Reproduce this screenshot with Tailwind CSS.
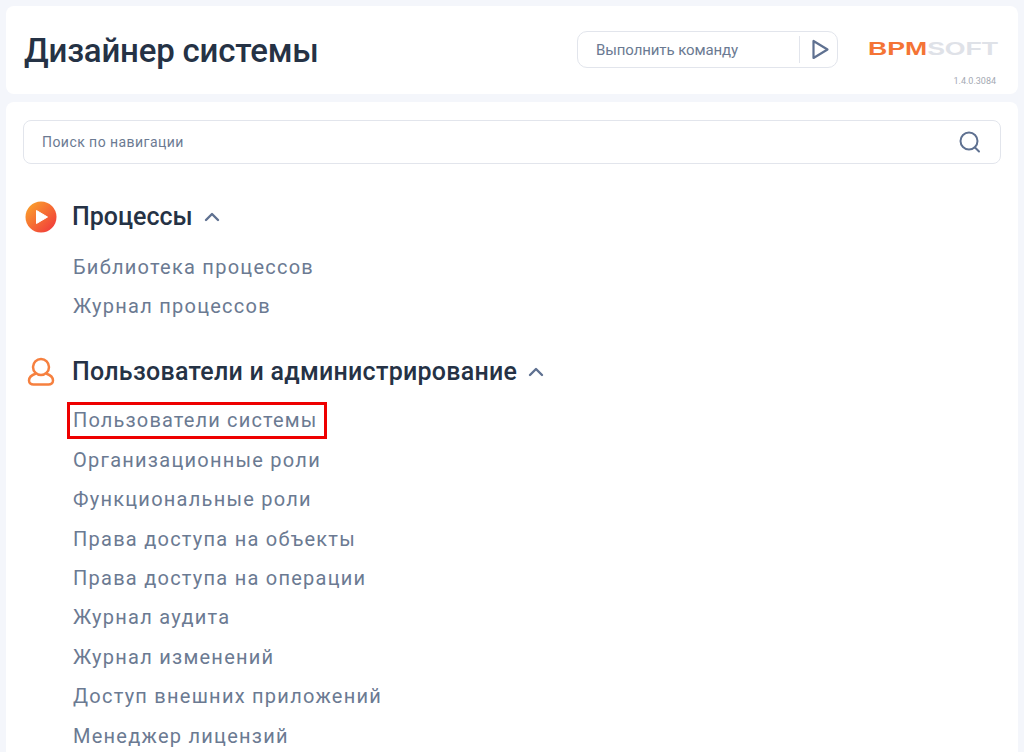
<!DOCTYPE html>
<html lang="ru">
<head>
  <meta charset="UTF-8" />
  <meta name="viewport" content="width=device-width, initial-scale=1.0" />
  <title>Дизайнер системы</title>
  <script src="https://cdn.jsdelivr.net/npm/@tailwindcss/browser@4"></script>
</head>
<body class="bg-[#f4f6fb] h-[752px] overflow-hidden font-['Roboto',sans-serif]">

  <div class="px-[6px] pt-[6px] flex flex-col gap-2">
    <!-- шапка -->
    <header class="bg-white rounded-lg h-[88px] flex items-start relative">
      <h1 class="ml-[18px] mt-[24px] text-[33px] leading-[42px] font-medium tracking-[-0.2px] text-[#253245]">Дизайнер системы</h1>
      <div class="ml-auto mt-[25px] w-[261px] h-[37px] border border-[#e2e5ec] rounded-[10px] flex items-center">
        <span class="ml-[18px] mt-[2px] text-[15px] tracking-[-0.1px] text-[#6b7a92]">Выполнить команду</span>
        <div class="ml-auto w-px h-[27px] bg-[#e2e5ec]"></div>
        <svg class="ml-[10px] mr-[6px]" width="21" height="21" viewBox="0 0 21 21" fill="none" stroke="#5f7191" stroke-width="2.200" stroke-linejoin="round"><path d="M3.500 2v17l14-8.500z"/></svg>
      </div>
      <div class="w-[180px] h-full flex flex-col pt-[35px]">
        <div class="ml-[30px] w-[93px] h-[16px] font-['Liberation_Sans',sans-serif] font-bold text-[19px] leading-[16px] whitespace-nowrap origin-left scale-x-[1.4]">
          <span class="text-[#f47435]">BPM</span><span class="text-[#dfe2e8]">SOFT</span>
        </div>
        <span class="mt-[18px] ml-auto mr-[22px] text-[9px] leading-[12px] text-[#a4a9b3]">1.4.0.3084</span>
      </div>
    </header>

    <!-- основная карточка -->
    <main class="bg-white rounded-t-lg px-[17px] pt-[18px] h-[650px] overflow-hidden">
      <div class="h-[44px] border border-[#e2e5ec] rounded-lg flex items-center justify-between pl-[18px] pr-[18px]">
        <span class="text-[14px] tracking-[0.45px] text-[#6b7a92]">Поиск по навигации</span>
        <svg width="24" height="24" viewBox="0 0 24 24" fill="none" stroke="#5f7191" stroke-width="2" stroke-linecap="round"><circle cx="11" cy="11" r="8.500"/><path d="M17 17.500l4 4"/></svg>
      </div>

      <section class="mt-[32px]">
        <div class="flex items-center h-[42px]">
          <svg class="ml-[2px]" width="32" height="32" viewBox="0 0 32 32">
            <defs><linearGradient id="g" x1="0" y1="0" x2="1" y2="1"><stop offset="0" stop-color="#fbaa2b"/><stop offset="1" stop-color="#f0303c"/></linearGradient></defs>
            <circle cx="16" cy="16" r="15.500" fill="url(#g)"/>
            <path d="M11.500 9.500v13l11-6.500z" fill="#fff" stroke="#fff" stroke-width="1" stroke-linejoin="round"/>
          </svg>
          <h2 class="ml-[15px] text-[25px] font-medium text-[#253245]">Процессы</h2>
          <svg class="ml-[10px]" width="18" height="18" viewBox="0 0 18 18" fill="none" stroke="#5f7191" stroke-width="2.400" stroke-linecap="round" stroke-linejoin="round"><path d="M3 12l6-6 6 6"/></svg>
        </div>
        <ul class="mt-[9.500px] ml-[50px] text-[20px] leading-[39.400px] tracking-[1.250px] text-[#6b7a92]">
          <li>Библиотека процессов</li>
          <li>Журнал процессов</li>
        </ul>
      </section>

      <section class="mt-[24.500px]">
        <div class="flex items-center h-[42px]">
          <svg class="ml-[2px]" width="32" height="32" viewBox="0 0 32 32" fill="none" stroke="#f6803f" stroke-width="2.500"><circle cx="16" cy="11" r="8"/><path d="M11 17.500C6.500 19 4 22 4 24.500c0 2.500 2 4 4.500 4h15c2.500 0 4.500-1.500 4.500-4 0-2.500-2.500-5.500-7-7"/></svg>
          <h2 class="ml-[15px] text-[25px] tracking-[0.27px] font-medium text-[#253245]">Пользователи и администрирование</h2>
          <svg class="ml-[10px]" width="18" height="18" viewBox="0 0 18 18" fill="none" stroke="#5f7191" stroke-width="2.400" stroke-linecap="round" stroke-linejoin="round"><path d="M3 12l6-6 6 6"/></svg>
        </div>
        <ul class="mt-[8.500px] ml-[50px] text-[20px] leading-[39.400px] tracking-[1.250px] text-[#6b7a92]">
          <li><span class="relative tracking-[1.150px]">Пользователи системы<span class="absolute -left-[6px] -right-[10px] -top-[6px] -bottom-[7px] border-[3px] border-[#ee0000]"></span></span></li>
          <li>Организационные роли</li>
          <li>Функциональные роли</li>
          <li>Права доступа на объекты</li>
          <li>Права доступа на операции</li>
          <li>Журнал аудита</li>
          <li>Журнал изменений</li>
          <li>Доступ внешних приложений</li>
          <li>Менеджер лицензий</li>
        </ul>
      </section>
    </main>
  </div>

</body>
</html>
